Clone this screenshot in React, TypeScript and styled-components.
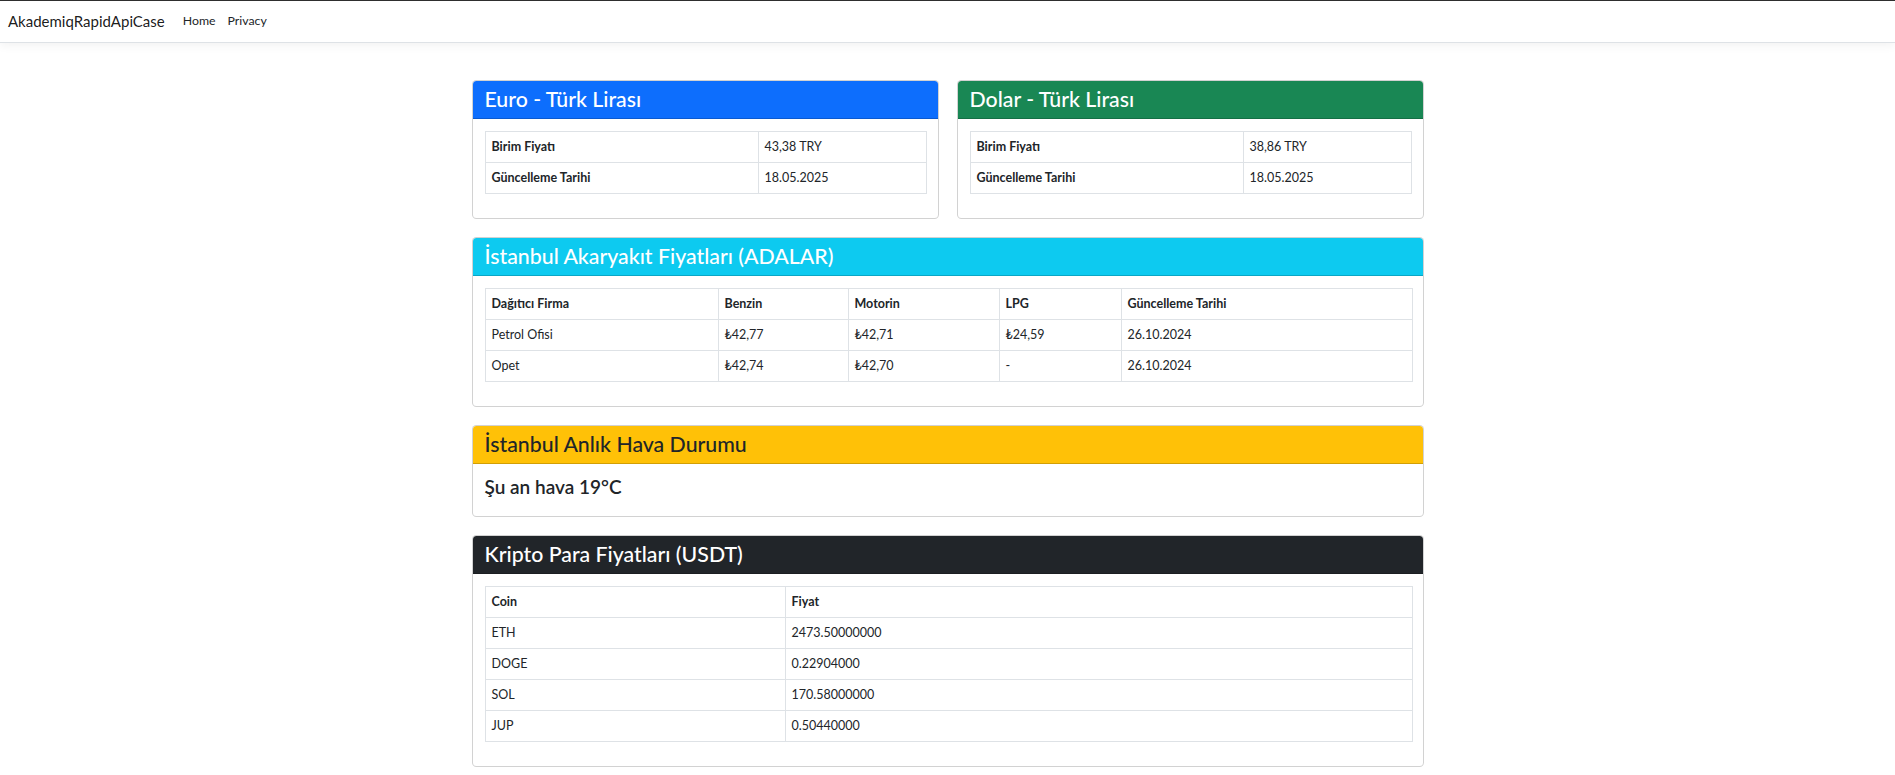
import React from "react";
import styled, { createGlobalStyle } from "styled-components";

const GlobalStyle = createGlobalStyle`
  html, body { margin: 0; padding: 0; }
  body {
    background: #ffffff;
    color: #212529;
    font-family: Lato, "Liberation Sans", Arial, sans-serif;
    font-size: 12px;
    line-height: 1.5;
    border-top: 1px solid #2e2e2e;
  }
  * { box-sizing: border-box; }
`;

const Navbar = styled.nav`
  display: flex;
  align-items: center;
  height: 42px;
  padding: 0 8px;
  background: #ffffff;
  border-bottom: 1px solid #dee2e6;
  box-shadow: 0 3px 9px rgba(0, 0, 0, 0.05);
`;

const Brand = styled.a`
  font-size: 15px;
  color: rgba(0, 0, 0, 0.9);
  text-decoration: none;
  margin-right: 12px;
`;

const NavList = styled.div`
  display: flex;
`;

const NavLink = styled.a`
  font-size: 12.3px;
  color: #212529;
  text-decoration: none;
  padding: 0 6px;
`;

const Main = styled.main`
  width: 952px;
  margin: 0 auto;
  padding-top: 37px;
  padding-bottom: 24px;
`;

const TwoCol = styled.div`
  display: grid;
  grid-template-columns: 1fr 1fr;
  column-gap: 18px;
`;

const Card = styled.section`
  border: 1px solid rgba(0, 0, 0, 0.175);
  border-radius: 4.5px;
  overflow: hidden;
  background: #fff;
  margin-bottom: 18px;
`;

const CardHeader = styled.div<{ $bg: string; $fg: string }>`
  background: ${(p) => p.$bg};
  color: ${(p) => p.$fg};
  padding: 6px 12px;
  border-bottom: 1px solid rgba(0, 0, 0, 0.175);
`;

const HeaderTitle = styled.h3`
  margin: 0;
  font-size: 21.3px;
  font-weight: 500;
  line-height: 25px;
`;

const CardBody = styled.div`
  padding: 12px;
`;

const WeatherText = styled.h4`
  margin: 0 0 6px;
  font-size: 19px;
  font-weight: 600;
  line-height: 22px;
`;

const Table = styled.table`
  width: 100%;
  border-collapse: collapse;
  margin-bottom: 12px;
  table-layout: fixed;
  font-size: 12.5px;
`;

const Col = styled.col<{ $w: number }>`
  width: ${(p) => p.$w}px;
`;

const Th = styled.th`
  text-align: left;
  font-weight: 700;
  padding: 6px;
  line-height: 18px;
  border: 1px solid #dee2e6;
`;

const Td = styled.td`
  padding: 6px;
  line-height: 18px;
  border: 1px solid #dee2e6;
`;

const KeyValueCard = ({
  title,
  bg,
  price,
  date,
}: {
  title: string;
  bg: string;
  price: string;
  date: string;
}) => (
  <Card>
    <CardHeader $bg={bg} $fg="#ffffff">
      <HeaderTitle>{title}</HeaderTitle>
    </CardHeader>
    <CardBody>
      <Table>
        <colgroup>
          <Col $w={273} />
          <Col $w={168} />
        </colgroup>
        <tbody>
          <tr>
            <Th>Birim Fiyatı</Th>
            <Td>{price}</Td>
          </tr>
          <tr>
            <Th>Güncelleme Tarihi</Th>
            <Td>{date}</Td>
          </tr>
        </tbody>
      </Table>
    </CardBody>
  </Card>
);

const fuel = [
  ["Petrol Ofisi", "₺42,77", "₺42,71", "₺24,59", "26.10.2024"],
  ["Opet", "₺42,74", "₺42,70", "-", "26.10.2024"],
];

const crypto = [
  ["ETH", "2473.50000000"],
  ["DOGE", "0.22904000"],
  ["SOL", "170.58000000"],
  ["JUP", "0.50440000"],
];

export default function App() {
  return (
    <>
      <GlobalStyle />
      <Navbar>
        <Brand href="#">AkademiqRapidApiCase</Brand>
        <NavList>
          <NavLink href="#">Home</NavLink>
          <NavLink href="#">Privacy</NavLink>
        </NavList>
      </Navbar>
      <Main>
        <TwoCol>
          <KeyValueCard title="Euro - Türk Lirası" bg="#0d6efd" price="43,38 TRY" date="18.05.2025" />
          <KeyValueCard title="Dolar - Türk Lirası" bg="#198754" price="38,86 TRY" date="18.05.2025" />
        </TwoCol>

        <Card>
          <CardHeader $bg="#0dcaf0" $fg="#ffffff">
            <HeaderTitle>İstanbul Akaryakıt Fiyatları (ADALAR)</HeaderTitle>
          </CardHeader>
          <CardBody>
            <Table>
              <colgroup>
                <Col $w={233} />
                <Col $w={130} />
                <Col $w={151} />
                <Col $w={122} />
                <Col $w={291} />
              </colgroup>
              <thead>
                <tr>
                  <Th>Dağıtıcı Firma</Th>
                  <Th>Benzin</Th>
                  <Th>Motorin</Th>
                  <Th>LPG</Th>
                  <Th>Güncelleme Tarihi</Th>
                </tr>
              </thead>
              <tbody>
                {fuel.map((r) => (
                  <tr key={r[0]}>
                    {r.map((c, i) => (
                      <Td key={i}>{c}</Td>
                    ))}
                  </tr>
                ))}
              </tbody>
            </Table>
          </CardBody>
        </Card>

        <Card>
          <CardHeader $bg="#ffc107" $fg="#212529">
            <HeaderTitle>İstanbul Anlık Hava Durumu</HeaderTitle>
          </CardHeader>
          <CardBody>
            <WeatherText>Şu an hava 19°C</WeatherText>
          </CardBody>
        </Card>

        <Card>
          <CardHeader $bg="#212529" $fg="#ffffff">
            <HeaderTitle>Kripto Para Fiyatları (USDT)</HeaderTitle>
          </CardHeader>
          <CardBody>
            <Table>
              <colgroup>
                <Col $w={300} />
                <Col $w={627} />
              </colgroup>
              <thead>
                <tr>
                  <Th>Coin</Th>
                  <Th>Fiyat</Th>
                </tr>
              </thead>
              <tbody>
                {crypto.map((r) => (
                  <tr key={r[0]}>
                    <Td>{r[0]}</Td>
                    <Td>{r[1]}</Td>
                  </tr>
                ))}
              </tbody>
            </Table>
          </CardBody>
        </Card>
      </Main>
    </>
  );
}
